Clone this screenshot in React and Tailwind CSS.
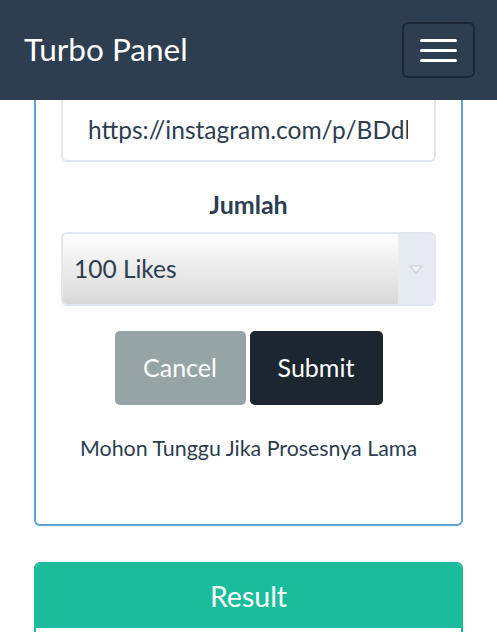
import React from 'react'

export default function App(){
  return (
    <div className="w-[497px] h-[632px] overflow-hidden bg-white font-['Lato',sans-serif] text-[#2c3e50]">
      <nav className="h-[100px] bg-[#2c3e50] flex items-center justify-between pl-[24px] pr-[22px]">
        <span className="text-white text-[31.5px] leading-none">Turbo Panel</span>
        <button className="w-[73px] h-[56px] rounded-[6px] border-2 border-[#1b2836] flex flex-col items-center justify-center gap-[7px]">
          <span className="block w-[37px] h-[3px] bg-white rounded-sm"></span>
          <span className="block w-[37px] h-[3px] bg-white rounded-sm"></span>
          <span className="block w-[37px] h-[3px] bg-white rounded-sm"></span>
        </button>
      </nav>

      <div className="px-[34px]">
        <div className="border-2 border-t-0 border-[#5ba4d6] rounded-b-[6px] px-[25px] pb-[65px] flex flex-col items-center">
          <div className="w-full h-[62px] border-2 border-t-0 border-[#e3e8ee] rounded-b-[6px] flex items-center pl-[25px] pr-[25px] text-[24.5px] overflow-hidden whitespace-nowrap">
            <span className="block overflow-hidden w-[320px]">https://instagram.com/p/BDdl</span>
          </div>
          <div className="mt-[30px] font-bold text-[25px] leading-none">Jumlah</div>
          <div className="mt-[15px] w-full h-[74px] rounded-[6px] border-2 border-[#e3e8ee] flex overflow-hidden">
            <div className="flex-1 flex items-center pl-[11px] text-[24.5px] bg-gradient-to-b from-white to-[#d8d8d8]">100 Likes</div>
            <div className="w-[36px] bg-[#e7ecf3] flex items-center justify-center">
              <svg width="14" height="9" viewBox="0 0 14 9"><path d="M1 1 L7 8 L13 1 Z" fill="#f4f6f9" stroke="#c8d1dc" strokeWidth="1.2" strokeLinejoin="round"/></svg>
            </div>
          </div>
          <div className="mt-[25px] flex gap-[4px]">
            <button className="w-[131px] h-[74px] rounded-[5px] bg-[#95a5a6] text-white text-[25px]">Cancel</button>
            <button className="w-[133px] h-[74px] rounded-[5px] bg-[#1b2631] text-white text-[25px]">Submit</button>
          </div>
          <div className="mt-[33px] text-[21.4px] leading-none">Mohon Tunggu Jika Prosesnya Lama</div>
        </div>

        <div className="mt-[36px] rounded-t-[6px] border-2 border-[#1abc9c] overflow-hidden">
          <div className="h-[64px] bg-[#1abc9c] flex items-center justify-center text-white text-[28.5px]">Result</div>
          <div className="h-[40px] bg-white"></div>
        </div>
      </div>
    </div>
  )
}
